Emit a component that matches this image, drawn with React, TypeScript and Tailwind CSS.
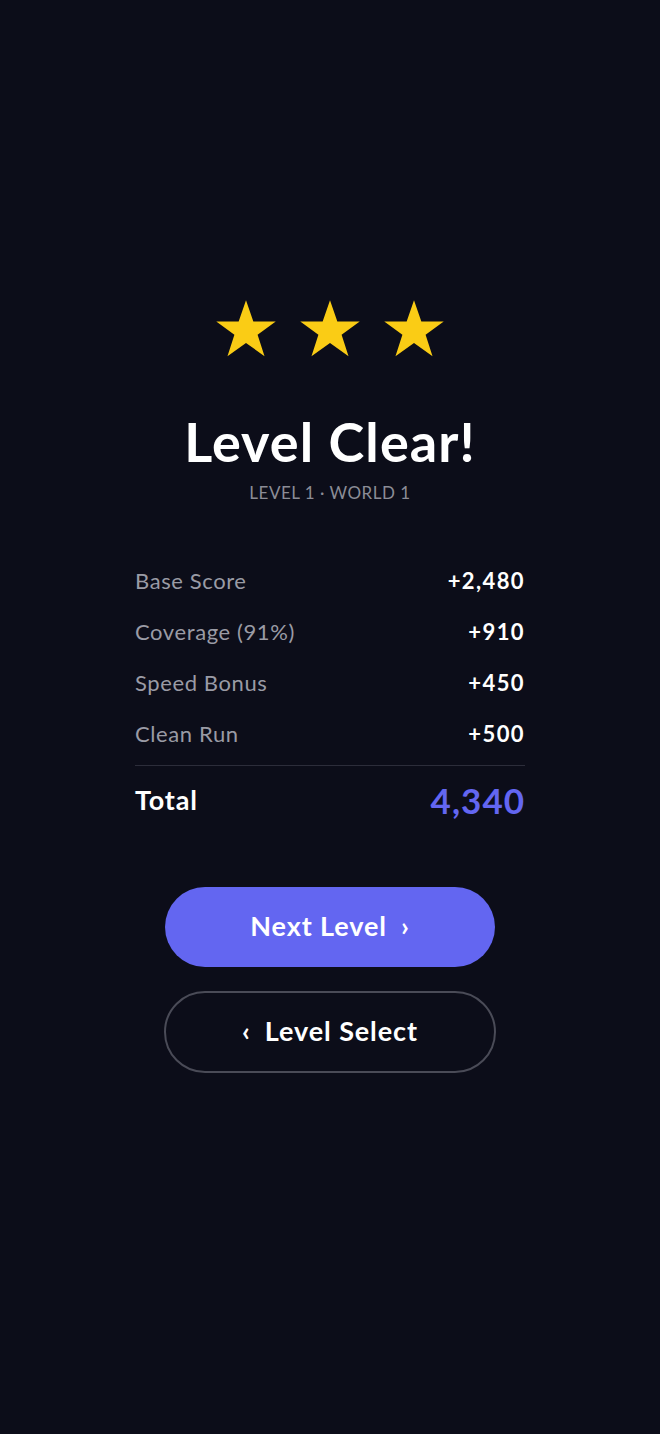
import React from 'react';

const ROWS = [
  { label: 'Base Score', value: '+2,480' },
  { label: 'Coverage (91%)', value: '+910' },
  { label: 'Speed Bonus', value: '+450' },
  { label: 'Clean Run', value: '+500' },
];

function Star() {
  return (
    <svg width="64" height="64" viewBox="0 0 24 24" aria-hidden>
      <path
        d="M12 1.6l2.75 7.95h8.4l-6.8 4.95 2.6 8.05L12 17.6l-6.95 4.95 2.6-8.05-6.8-4.95h8.4z"
        fill="#facc15"
      />
    </svg>
  );
}

export default function App() {
  return (
    <div
      className="min-h-[1434px] w-full bg-[#0c0d19] text-white flex flex-col items-center pt-[296px]"
      style={{ fontFamily: 'Lato, "Noto Sans", sans-serif' }}
    >
      {/* Stars */}
      <div className="flex gap-[20px]">
        <Star />
        <Star />
        <Star />
      </div>

      {/* Heading */}
      <h1 className="mt-[55px] text-[54px] font-bold leading-none tracking-[1.1px]">Level Clear!</h1>
      <p className="mt-[11px] text-[17px] text-[#8b8c96] tracking-[0.5px]">LEVEL 1 · WORLD 1</p>

      {/* Score breakdown */}
      <div className="mt-[49px] w-[390px]">
        {ROWS.map((row) => (
          <div key={row.label} className="flex items-center justify-between h-[51px]">
            <span className="text-[22px] text-[#9a9ba5] tracking-[0.6px]">{row.label}</span>
            <span className="text-[22px] font-bold tracking-[1.4px]">{row.value}</span>
          </div>
        ))}
        <div className="mt-[6px] border-t border-[#2c2d3a]" />
        <div className="flex items-center justify-between h-[69px]">
          <span className="text-[27px] font-bold tracking-[0.8px]">Total</span>
          <span className="text-[35px] font-bold text-[#6366f1] tracking-[1px]">4,340</span>
        </div>
      </div>

      {/* Actions */}
      <div className="mt-[52px] flex flex-col items-center gap-[24px]">
        <button className="w-[330px] h-[80px] rounded-full bg-[#6366f1] text-[27px] font-bold tracking-[0.9px] flex items-center justify-center gap-[14px]">
          <span>Next Level</span>
          <span>›</span>
        </button>
        <button className="w-[332px] h-[82px] rounded-full border-2 border-[#4a4b57] text-[27px] font-bold tracking-[0.9px] flex items-center justify-center gap-[14px]">
          <span>‹</span>
          <span>Level Select</span>
        </button>
      </div>
    </div>
  );
}
